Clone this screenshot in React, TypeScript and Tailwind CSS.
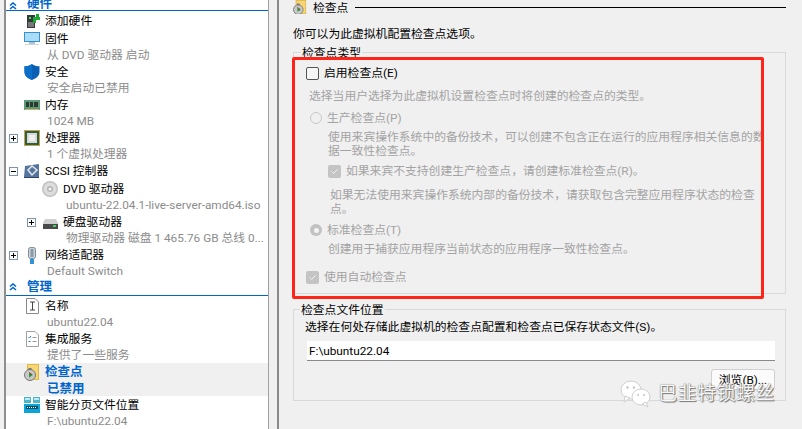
import React from "react";

const FONT = "font-['Roboto','Noto_Sans_CJK_SC',sans-serif]";

function Plus({ open }: { open?: boolean }) {
  return (
    <svg width="9" height="9" viewBox="0 0 9 9" className="shrink-0">
      <rect x="0.5" y="0.5" width="8" height="8" fill="#fff" stroke="#7d93b0" />
      <path d={open ? "M2 4.5H7" : "M2 4.5H7M4.5 2V7"} stroke="#000" strokeWidth="1" />
    </svg>
  );
}

function Chevrons() {
  return (
    <svg width="8" height="8" viewBox="0 0 8 8" className="shrink-0">
      <path d="M1 3.5 4 1 7 3.5M1 7 4 4.5 7 7" fill="none" stroke="#0066cc" strokeWidth="1.6" />
    </svg>
  );
}

const AddHw = () => (
  <svg width="16" height="18" viewBox="0 0 16 18">
    <rect x="3" y="3" width="8" height="13" fill="#33383d" />
    <rect x="4" y="10" width="6" height="5" fill="#777" />
    <path d="M5 5h2v2H5z" fill="#4be04b" />
    <path d="M9 5h3V2h3v3h1v3h-4v3H9z" fill="#19a832" />
  </svg>
);
const Monitor = () => (
  <svg width="16" height="16" viewBox="0 0 16 16">
    <rect x="0" y="1" width="16" height="10" fill="#3a8fd0" />
    <rect x="1" y="2" width="14" height="8" fill="#a8dcf7" />
    <rect x="5" y="11" width="6" height="2" fill="#a9c4d6" />
    <rect x="1" y="13" width="14" height="1" fill="#d5d5d5" />
  </svg>
);
const Shield = () => (
  <svg width="16" height="18" viewBox="0 0 16 18">
    <path d="M8 1c2 1.6 4.5 2.3 7.5 2.3V9c0 3.6-3 6.3-7.5 8C3.500 15.300.5 12.600.5 9V3.300C3.500 3.300 6 2.600 8 1z" fill="#0a5fb4" />
    <path d="M8 1v16C3.500 15.300.5 12.600.5 9V3.300C3.500 3.300 6 2.600 8 1z" fill="#0b6fc9" />
  </svg>
);
const Memory = () => (
  <svg width="16" height="12" viewBox="0 0 16 12">
    <rect x="0" y="1" width="16" height="10" fill="#5d9a78" />
    <path d="M2 3h3v5H2zM6 3h3v5H6zM10 3h4v5h-4z" fill="#2c3a33" />
    <path d="M1 10h14v1H1z" fill="#c7b36a" />
  </svg>
);
const Cpu = () => (
  <svg width="16" height="16" viewBox="0 0 16 16">
    <rect x="0" y="0" width="16" height="16" fill="#c4a44a" />
    <rect x="1" y="1" width="14" height="14" fill="#2f5f43" />
    <rect x="3" y="3" width="10" height="10" fill="#d8d8d8" />
    <rect x="5" y="5" width="6" height="6" fill="#eeeeee" />
  </svg>
);
const Scsi = () => (
  <svg width="16" height="14" viewBox="0 0 16 14">
    <path d="M1 2 15 0v13H0z" fill="#55759f" />
    <path d="M8 2 13 6 8 11 4 6z" fill="none" stroke="#e5e9ee" strokeWidth="1.500" />
    <path d="M0 13h15v1H0z" fill="#2f4666" />
  </svg>
);
const Dvd = () => (
  <svg width="16" height="16" viewBox="0 0 16 16">
    <circle cx="8" cy="8" r="8" fill="#c2c2c2" />
    <circle cx="8" cy="8" r="6.500" fill="#dddddd" />
    <circle cx="8" cy="8" r="3" fill="#b4b4b4" />
    <circle cx="8" cy="8" r="1.500" fill="#f4f4f4" />
  </svg>
);
const Hdd = () => (
  <svg width="15" height="18" viewBox="0 0 15 18">
    <path d="M2 6h11l2 4v1H0v-1z" fill="#cfcfcf" />
    <rect x="0" y="11" width="15" height="5" fill="#4a4a4a" />
    <rect x="10" y="12" width="3" height="2" fill="#38d655" />
  </svg>
);
const Net = () => (
  <svg width="8" height="18" viewBox="0 0 8 18">
    <rect x="0.500" y="1.500" width="7" height="11" rx="2" fill="#c9d3dc" stroke="#7f8d99" />
    <rect x="2.500" y="3" width="3" height="8" fill="#8d9aa6" />
    <rect x="2" y="13" width="4" height="5" fill="#2f93d6" />
  </svg>
);
const DocI = () => (
  <svg width="13" height="16" viewBox="0 0 13 16">
    <path d="M.5.500H9L12.500 4v11.500H.5z" fill="#fff" stroke="#8a8a8a" />
    <path d="M4 4h5M4 12h5M6.500 4v8" stroke="#444" fill="none" />
  </svg>
);
const DocCheck = () => (
  <svg width="13" height="16" viewBox="0 0 13 16">
    <path d="M.5.500H9L12.500 4v11.500H.5z" fill="#fff" stroke="#a0a0a0" />
    <path d="M2.500 6l1 1 1.500-2M2.500 10.500h2" stroke="#2d7fd0" fill="none" />
    <path d="M6.500 6.500h4M6.500 10.500h4" stroke="#999" fill="none" />
  </svg>
);
const Checkpoint = () => (
  <svg width="16" height="18" viewBox="0 0 16 18">
    <rect x="3.500" y="1.500" width="11" height="15" fill="#f7d774" stroke="#e0b84a" />
    <circle cx="6" cy="12" r="5.500" fill="#c8c8c8" stroke="#777" />
    <rect x="4.500" y="5" width="3" height="2" fill="#777" />
    <path d="M5 9.500v5l4-2.500z" fill="#1d9a3a" />
    <path d="M5 9.500l3 2" stroke="#c0392b" />
  </svg>
);
const Paging = () => (
  <svg width="16" height="16" viewBox="0 0 16 16">
    <path d="M0 0h7v6H0zM9 0h7v6H9z" fill="#4bb5c9" />
    <path d="M1 1h5v2H1zM10 1h5v2h-5z" fill="#bfe9f0" />
    <rect x="0" y="7" width="16" height="9" fill="#0aa5d8" />
    <path d="M2 9h12v3H2z" fill="#124a66" />
    <path d="M3 10h1v1H3zM5 10h1v1H5zM7 10h1v1H7zM9 10h1v1H9zM11 10h1v1h-1z" fill="#e8fbff" />
  </svg>
);

function Item({
  icon, title, sub, toggle, open, child, selected,
}: {
  icon: React.ReactNode; title: string; sub?: string; toggle?: boolean; open?: boolean; child?: boolean; selected?: boolean;
}) {
  return (
    <div className={selected ? "bg-[#f0f0f0]" : ""}>
      <div className={`flex h-[18px] items-center ${child ? "pl-[21px]" : "pl-[3px]"}`}>
        <div className="flex w-[15px] items-center">
          {toggle && <Plus open={open} />}
        </div>
        <div className="flex h-[18px] w-[16px] items-center justify-center">{icon}</div>
        <span className={`ml-[5px] whitespace-nowrap ${selected ? "text-[12.5px] font-bold text-[#0066cc]" : "text-black"}`}>{title}</span>
      </div>
      {sub && (
        <div className={`h-[15px] leading-[15px] whitespace-nowrap ${child ? "pl-[60px]" : "pl-[41px]"} ${selected ? "text-[12.5px] font-bold text-[#0066cc]" : "text-[#8c8c8c]"}`}>
          {sub}
        </div>
      )}
    </div>
  );
}

function Sidebar() {
  return (
    <aside className="h-[429px] w-[265px] shrink-0 overflow-hidden border-r border-l-2 border-r-[#a0a0a0] border-l-[#8f8f8f] bg-white">
      <div className="flex h-[11px] items-end overflow-hidden border-b border-[#0066cc] pl-[3px]">
        <Chevrons />
        <span className="-mb-[3px] ml-[10px] text-[12.5px] leading-[18px] font-bold text-[#0066cc]">硬件</span>
      </div>
      <div className="h-px" />
      <Item icon={<AddHw />} title="添加硬件" />
      <Item icon={<Monitor />} title="固件" sub="从 DVD 驱动器 启动" />
      <Item icon={<Shield />} title="安全" sub="安全启动已禁用" />
      <Item icon={<Memory />} title="内存" sub="1024 MB" />
      <Item icon={<Cpu />} title="处理器" sub="1 个虚拟处理器" toggle />
      <Item icon={<Scsi />} title="SCSI 控制器" toggle open />
      <Item icon={<Dvd />} title="DVD 驱动器" sub="ubuntu-22.04.1-live-server-amd64.iso" child />
      <Item icon={<Hdd />} title="硬盘驱动器" sub="物理驱动器 磁盘 1 465.76 GB 总线 0..." child toggle />
      <Item icon={<Net />} title="网络适配器" sub="Default Switch" toggle />
      <div className="flex h-[17px] items-center border-b border-[#0066cc] pl-[3px]">
        <Chevrons />
        <span className="ml-[10px] text-[12.5px] font-bold text-[#0066cc]">管理</span>
      </div>
      <div className="h-px" />
      <Item icon={<DocI />} title="名称" sub="ubuntu22.04" />
      <Item icon={<DocCheck />} title="集成服务" sub="提供了一些服务" />
      <Item icon={<Checkpoint />} title="检查点" sub="已禁用" selected />
      <Item icon={<Paging />} title="智能分页文件位置" sub="F:\ubuntu22.04" />
    </aside>
  );
}

function Check({ checked }: { checked?: boolean }) {
  if (!checked)
    return <span className="block h-[13px] w-[13px] shrink-0 rounded-[2px] border border-[#555] bg-[#f6f6f6]" />;
  return (
    <span className="flex h-[13px] w-[13px] shrink-0 items-center justify-center rounded-[2px] bg-[#c4c4c4]">
      <svg width="9" height="9" viewBox="0 0 9 9"><path d="M1.500 4.500 3.500 6.500 7.500 2.500" fill="none" stroke="#f2f2f2" strokeWidth="1" /></svg>
    </span>
  );
}

function Radio({ on }: { on?: boolean }) {
  return on ? (
    <span className="flex h-[12px] w-[12px] shrink-0 items-center justify-center rounded-full bg-[#c2c2c2]">
      <span className="block h-[5px] w-[5px] rounded-full bg-[#f4f4f4]" />
    </span>
  ) : (
    <span className="block h-[12px] w-[12px] shrink-0 rounded-full border border-[#c8c8c8] bg-[#f0f0f0]" />
  );
}

function Main() {
  const dim = "text-[#a3a3a3]";
  return (
    <main className="relative ml-[8px] h-[429px] min-w-0 flex-1 border-l-2 border-l-[#8a8a8a] pr-[16px] pl-[14px]">
      <div className="flex h-[15px] items-center">
        <div className="-mt-[1px] flex h-[14px] w-[14px] items-center overflow-hidden"><Checkpoint /></div>
        <span className="ml-[6px] text-black">检查点</span>
        <div className="ml-[7px] h-px flex-1 bg-black" />
      </div>
      <div className="mt-[10px] h-[18px] leading-[18px] text-black">你可以为此虚拟机配置检查点选项。</div>

      <section className="relative mt-[9px] h-[242px] border border-[#d9d9d9]">
        <span className="absolute -top-[9px] left-[7px] bg-[#f0f0f0] px-px leading-[18px] text-black">检查点类型</span>
        <div className="pt-[11px] pl-[12px]">
          <label className="flex h-[18px] items-center gap-[5px] text-black"><Check /><span>启用检查点(E)</span></label>
          <div className={`mt-[5px] h-[18px] pl-[3px] leading-[18px] ${dim}`}>选择当用户选择为此虚拟机设置检查点时将创建的检查点的类型。</div>
          <div className={`mt-[4px] flex h-[18px] items-center gap-[5px] pl-[4px] ${dim}`}><Radio /><span>生产检查点(P)</span></div>
          <div className={`mt-[3px] w-[457px] overflow-hidden pl-[22px] leading-[14px] ${dim}`}>
            <div className="whitespace-nowrap">使用来宾操作系统中的备份技术，可以创建不包含正在运行的应用程序相关信息的数据</div>
            <div className="whitespace-nowrap">据一致性检查点。</div>
          </div>
          <div className={`mt-[4px] flex h-[18px] items-center gap-[5px] pl-[22px] ${dim}`}><Check checked /><span>如果来宾不支持创建生产检查点，请创建标准检查点(R)。</span></div>
          <div className={`mt-[8px] w-[456px] pl-[24px] leading-[14px] ${dim}`}>
            如果无法使用来宾操作系统内部的备份技术，请获取包含完整应用程序状态的检查点。
          </div>
          <div className={`mt-[5px] flex h-[18px] items-center gap-[5px] pl-[4px] ${dim}`}><Radio on /><span>标准检查点(T)</span></div>
          <div className={`mt-[1px] h-[18px] pl-[22px] leading-[18px] ${dim}`}>创建用于捕获应用程序当前状态的应用程序一致性检查点。</div>
          <div className={`mt-[10px] flex h-[18px] items-center gap-[5px] ${dim}`}><Check checked /><span>使用自动检查点</span></div>
        </div>
      </section>

      <section className="relative mt-[15px] h-[92px] border border-[#d9d9d9]">
        <span className="absolute -top-[9px] left-[6px] bg-[#f0f0f0] px-px leading-[18px] text-black">检查点文件位置</span>
        <div className="pt-[8px] pr-[10px] pl-[11px]">
          <div className="h-[18px] leading-[18px] text-black">选择在何处存储此虚拟机的检查点配置和检查点已保存状态文件(S)。</div>
          <div className="mt-[5px] ml-[2px] flex h-[20px] items-center border-b border-[#8a8a8a] bg-white pl-[2px] text-black">F:\ubuntu22.04</div>
          <div className="mt-[8px] flex justify-end">
            <button className="h-[21px] w-[64px] rounded-[3px] border border-[#d0d0d0] bg-[#fbfbfb] text-black">浏览(B)...</button>
          </div>
        </div>
      </section>
    </main>
  );
}

export default function App() {
  return (
    <div className={`relative flex h-[429px] w-[802px] overflow-hidden bg-[#f0f0f0] pl-[4px] text-[11.8px] leading-[18px] ${FONT}`}>
      <Sidebar />
      <Main />
      <div className="pointer-events-none absolute top-[57px] left-[292px] h-[242px] w-[472px] rounded-[2px] border-[3px] border-[#ff2418]" />
      <div className="pointer-events-none absolute top-[380px] left-[620px] flex items-center gap-[6px]">
        <svg width="32" height="28" viewBox="0 0 32 28">
          <ellipse cx="11" cy="10" rx="10" ry="9" fill="#fff" stroke="#cfcfcf" />
          <path d="M5 16 4 22 10 18z" fill="#fff" stroke="#cfcfcf" />
          <ellipse cx="21" cy="17" rx="9" ry="8" fill="#fff" stroke="#cfcfcf" />
          <path d="M26 22 28 27 22 24z" fill="#fff" stroke="#cfcfcf" />
          <circle cx="7.500" cy="7.500" r="1.200" fill="#c4c4c4" />
          <circle cx="14" cy="7.500" r="1.200" fill="#c4c4c4" />
          <circle cx="18" cy="15" r="1" fill="#c4c4c4" />
          <circle cx="24" cy="15" r="1" fill="#c4c4c4" />
        </svg>
        <span className="text-[19px] leading-[24px] tracking-[0.5px] text-[#f8f8f8] [text-shadow:0_0_1px_#555,1px_1px_1px_#777]">巴韭特锁螺丝</span>
      </div>
    </div>
  );
}
